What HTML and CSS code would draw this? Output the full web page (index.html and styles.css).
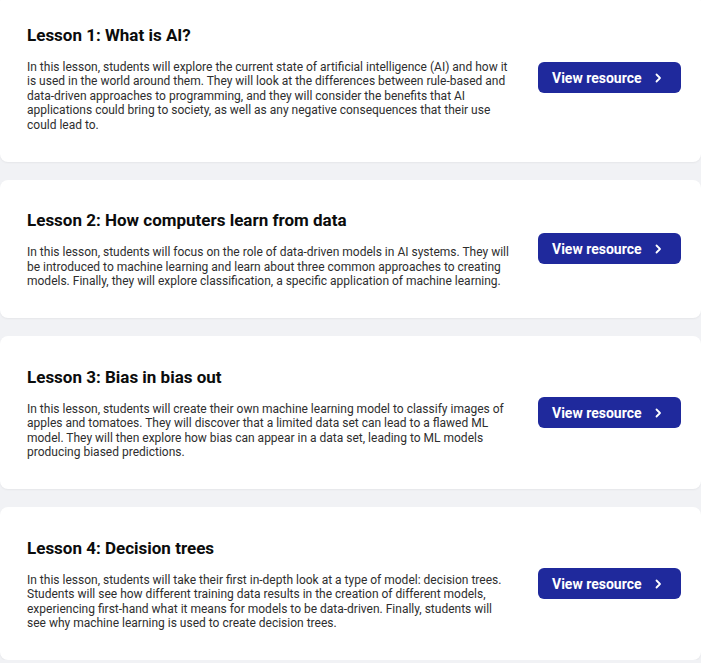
FILE: index.html
```html
<!DOCTYPE html>
<html lang="en">
<head>
<meta charset="utf-8">
<title>Lessons</title>
<link rel="stylesheet" href="styles.css">
</head>
<body>
<main class="lessons">
  <section class="card">
    <div class="card-body">
      <h2 class="card-title">Lesson 1: What is AI?</h2>
      <p class="card-text">In this lesson, students will explore the current state of artificial intelligence (AI) and how it is used in the world around them. They will look at the differences between rule-based and data-driven approaches to programming, and they will consider the benefits that AI applications could bring to society, as well as any negative consequences that their use could lead to.</p>
    </div>
    <a class="btn" href="#">View resource <svg class="chev" width="7" height="10" viewBox="0 0 7 10"><path d="M1.5 1.5 L5 5 L1.5 8.5" fill="none" stroke="#fff" stroke-width="1.8" stroke-linecap="round" stroke-linejoin="round"/></svg></a>
  </section>
  <section class="card">
    <div class="card-body">
      <h2 class="card-title">Lesson 2: How computers learn from data</h2>
      <p class="card-text">In this lesson, students will focus on the role of data-driven models in AI systems. They will be introduced to machine learning and learn about three common approaches to creating models. Finally, they will explore classification, a specific application of machine learning.</p>
    </div>
    <a class="btn" href="#">View resource <svg class="chev" width="7" height="10" viewBox="0 0 7 10"><path d="M1.5 1.5 L5 5 L1.5 8.5" fill="none" stroke="#fff" stroke-width="1.8" stroke-linecap="round" stroke-linejoin="round"/></svg></a>
  </section>
  <section class="card">
    <div class="card-body">
      <h2 class="card-title">Lesson 3: Bias in bias out</h2>
      <p class="card-text">In this lesson, students will create their own machine learning model to classify images of apples and tomatoes. They will discover that a limited data set can lead to a flawed ML model. They will then explore how bias can appear in a data set, leading to ML models producing biased predictions.</p>
    </div>
    <a class="btn" href="#">View resource <svg class="chev" width="7" height="10" viewBox="0 0 7 10"><path d="M1.5 1.5 L5 5 L1.5 8.5" fill="none" stroke="#fff" stroke-width="1.8" stroke-linecap="round" stroke-linejoin="round"/></svg></a>
  </section>
  <section class="card">
    <div class="card-body">
      <h2 class="card-title">Lesson 4: Decision trees</h2>
      <p class="card-text">In this lesson, students will take their first in-depth look at a type of model: decision trees. Students will see how different training data results in the creation of different models, experiencing first-hand what it means for models to be data-driven. Finally, students will see why machine learning is used to create decision trees.</p>
    </div>
    <a class="btn" href="#">View resource <svg class="chev" width="7" height="10" viewBox="0 0 7 10"><path d="M1.5 1.5 L5 5 L1.5 8.5" fill="none" stroke="#fff" stroke-width="1.8" stroke-linecap="round" stroke-linejoin="round"/></svg></a>
  </section>
</main>
</body>
</html>
```

FILE: styles.css
```css
html, body {
  margin: 0;
  padding: 0;
  background: #f1f2f5;
  font-family: Roboto, "Liberation Sans", Arial, sans-serif;
}

.lessons {
  display: flex;
  flex-direction: column;
  gap: 18px;
  margin-top: -6px;
}

.card {
  display: flex;
  align-items: center;
  gap: 27px;
  background: #ffffff;
  border-radius: 8px;
  padding: 29.5px 20px 29.5px 27px;
  box-shadow: 0 1px 2px rgba(0, 0, 0, 0.05);
}

.card-body {
  flex: 0 0 484px;
}

.card-title {
  margin: 0 0 13px;
  font-size: 17px;
  line-height: 23px;
  font-weight: 700;
  color: #0b0c0c;
}

.card-text {
  margin: 0;
  font-size: 12px;
  line-height: 14.5px;
  color: #2e2e2e;
}

.btn {
  display: flex;
  align-items: center;
  gap: 13px;
  box-sizing: border-box;
  width: 143px;
  height: 31px;
  padding: 0 0 0 14px;
  background: #1f299c;
  border-radius: 6px;
  color: #ffffff;
  font-size: 14px;
  font-weight: 700;
  text-decoration: none;
}

.chev {
  display: block;
}
```
